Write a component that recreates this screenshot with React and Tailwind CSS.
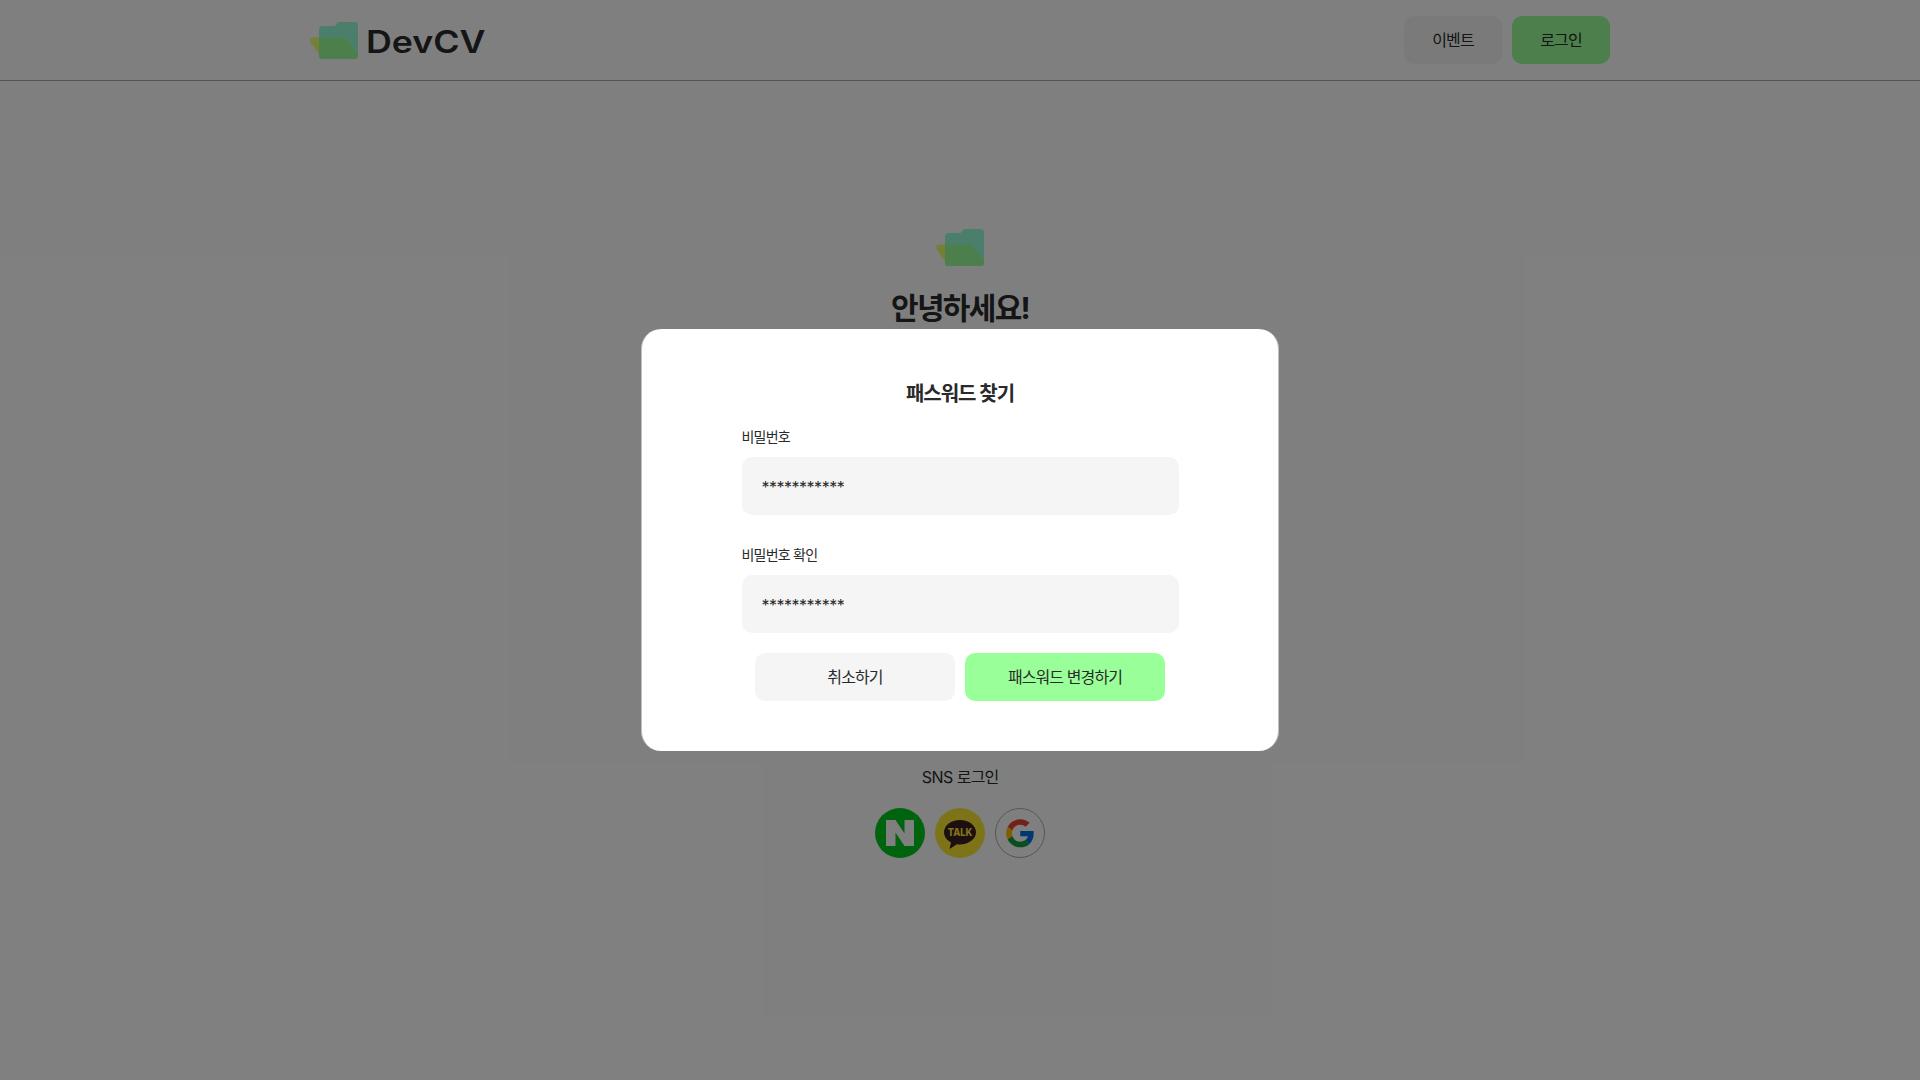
function Folder({ className }) {
  return (
    <svg viewBox="0 0 48 37" className={className} aria-hidden="true">
      <path d="M3 15.5h30.200c1.700 0 3 .8 3.900 2.200L48 31.500V33.500a3.500 3.500 0 0 1-3.500 3.500H15c-2 0-3.400-.8-4.500-2.400L.8 20.600C-.7 18.200.3 15.500 3 15.500Z" fill="#e3ff32" fillOpacity="0.7" />
      <path d="M12.500 4H23.500c1.800 0 2.400-.5 2.800-1.700C26.800.8 28 0 29.500 0H44.500A3.500 3.500 0 0 1 48 3.500v30a3.500 3.500 0 0 1-3.500 3.500h-32A3.500 3.500 0 0 1 9 33.500v-26A3.500 3.500 0 0 1 12.500 4Z" fill="#99ffd6" />
      <path d="M9 15.500h24.200c1.700 0 3 .8 3.900 2.200L48 31.500V33.500a3.500 3.500 0 0 1-3.500 3.500h-32A3.500 3.500 0 0 1 9 33.500Z" fill="#99ff99" />
    </svg>
  );
}

function Wordmark() {
  return (
    <svg width="126" height="40" viewBox="0 0 126 40" className="ml-1.5" aria-label="DevCV">
      <text x="2" y="32.500" textLength="119.500" lengthAdjust="spacingAndGlyphs" fontFamily="Inter" fontWeight="600" fontSize="31" fill="#2a2a2a">DevCV</text>
    </svg>
  );
}

function Field({ label }) {
  return (
    <label className="flex flex-col">
      <span className="h-[17px] text-sm leading-[15px] tracking-[-0.056em]">{label}</span>
      <span className="mt-[11px] flex h-[58px] items-center rounded-[10px] bg-[#f5f5f5] px-5 pt-0.5 text-base tracking-[-0.5px]">***********</span>
    </label>
  );
}

export default function App() {
  return (
    <div className="relative h-[1080px] w-full overflow-hidden bg-white font-['Inter','Noto_Sans_CJK_KR',sans-serif] text-[#2a2a2a]">
      <header className="flex h-[81px] items-center justify-between border-b border-[#aaaaaa] px-[310px]">
        <div className="flex items-center">
          <Folder className="h-[37px] w-12" />
          <Wordmark />
        </div>
        <nav className="flex gap-2.5 tracking-[-0.056em]">
          <button className="h-12 w-[98px] rounded-[10px] bg-[#f5f5f5]">이벤트</button>
          <button className="h-12 w-[98px] rounded-[10px] bg-[#99ff99]">로그인</button>
        </nav>
      </header>
      <main className="flex flex-col items-center pt-[147.5px]">
        <Folder className="h-[37px] w-12" />
        <h1 className="mt-[23px] text-[30px] leading-[38px] font-bold tracking-[-0.056em]">안녕하세요!</h1>
        <div className="h-[441.5px]" />
        <p className="leading-[19px] tracking-[-0.03em]">SNS <span className="tracking-[-0.056em]">로그인</span></p>
        <div className="mt-[21px] flex gap-2.5">
          <svg width="50" height="50" viewBox="0 0 50 50"><circle cx="25" cy="25" r="25" fill="#00c71a" /><path d="M11 12h9.500l9 13.500V12H39v26h-9.500l-9-13.500V38H11Z" fill="#fff" /></svg>
          <svg width="50" height="50" viewBox="0 0 50 50"><circle cx="25" cy="25" r="25" fill="#fae834" /><path d="M25 12c-8.800 0-16 5.400-16 12.200 0 4.300 2.800 8 7 10.200l-1.300 5.500c-.1.500.4.800.8.500l6.300-4.200c1 .2 2.100.2 3.200.2 8.800 0 16-5.500 16-12.200S33.800 12 25 12Z" fill="#3b1e1e" /><text x="25" y="28" textAnchor="middle" textLength="24.500" lengthAdjust="spacingAndGlyphs" fontFamily="Inter" fontWeight="800" fontSize="10.300" fill="#fae834">TALK</text></svg>
          <svg width="50" height="50" viewBox="0 0 50 50"><circle cx="25" cy="25" r="24.500" fill="#fff" stroke="#aaa" /><g transform="translate(11.200 11.200) scale(.585)"><path fill="#EA4335" d="M24 9.500c3.540 0 6.710 1.220 9.210 3.600l6.850-6.850C35.900 2.380 30.470 0 24 0 14.620 0 6.510 5.380 2.560 13.220l7.980 6.190C12.430 13.720 17.740 9.500 24 9.500z" /><path fill="#0070e0" d="M46.980 24.550c0-1.570-.15-3.090-.38-4.550H24v9.020h12.940c-.58 2.960-2.260 5.480-4.780 7.180l7.730 6c4.510-4.180 7.090-10.360 7.090-17.650z" /><path fill="#FBBC05" d="M10.530 28.590c-.48-1.450-.76-2.990-.76-4.590s.27-3.140.76-4.590l-7.980-6.190C.92 16.460 0 20.120 0 24s.92 7.540 2.560 10.780l7.970-6.190z" /><path fill="#149e41" d="M24 48c6.480 0 11.930-2.130 15.890-5.810l-7.730-6c-2.150 1.450-4.920 2.300-8.160 2.300-6.260 0-11.570-4.220-13.470-9.910l-7.980 6.190C6.510 42.620 14.620 48 24 48z" /></g></svg>
        </div>
      </main>
      <div className="absolute inset-0 flex items-center justify-center bg-black/50">
        <section role="dialog" className="h-[422px] w-[638px] rounded-[20px] border-x border-[#bfbfbf] bg-white px-[99.5px] pt-[50px]">
          <h2 className="h-7 pt-px text-center text-xl leading-7 font-bold tracking-[-0.05em]">패스워드 찾기</h2>
          <div className="mt-[22px] flex flex-col gap-8">
            <Field label="비밀번호" />
            <Field label="비밀번호 확인" />
          </div>
          <div className="mt-5 flex justify-center gap-2.5 tracking-[-0.056em]">
            <button className="h-12 w-[200px] rounded-[10px] bg-[#f5f5f5]">취소하기</button>
            <button className="h-12 w-[200px] rounded-[10px] bg-[#99ff99]">패스워드 변경하기</button>
          </div>
        </section>
      </div>
    </div>
  );
}
